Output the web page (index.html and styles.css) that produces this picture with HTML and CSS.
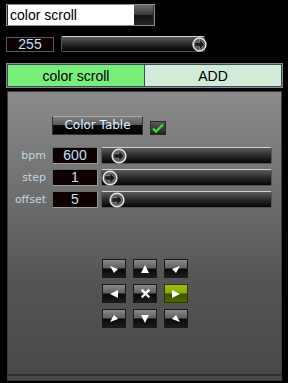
FILE: index.html
```html
<!DOCTYPE html>
<html lang="en">
<head>
    <meta charset="UTF-8">
    <title>color scroll</title>
    <link rel="stylesheet" href="styles.css">
</head>
<body>
    <div class="topbar">
        <div class="dropdown">
            <div class="dropdown-field">color scroll</div>
            <div class="dropdown-btn"></div>
        </div>
    </div>

    <div class="master-row">
        <div class="numbox master-num">255</div>
        <div class="slider master-slider">
            <svg class="knob" style="left: 130px" viewBox="0 0 14 14" width="15" height="15">
                <circle cx="7" cy="7" r="6" fill="#5a5a5a" stroke="#e6e6e6" stroke-width="1.4"/>
                <path d="M2.5 5h4.5v-3l4.5 5-4.5 5v-3h-4.5z" fill="#1c1c1c" stroke="#9a9a9a" stroke-width="0.6"/>
            </svg>
        </div>
    </div>

    <div class="tabs">
        <div class="tab tab-active">color scroll</div>
        <div class="tab">ADD</div>
    </div>

    <div class="panel">
        <div class="table-row">
            <div class="btn-table">Color Table</div>
            <div class="checkbox">
                <svg viewBox="0 0 14 12" width="14" height="12">
                    <path d="M2 6.5l3 3 7-7" fill="none" stroke="#2fe02f" stroke-width="2.4"/>
                </svg>
            </div>
        </div>

        <div class="params">
            <div class="param">
                <span class="param-label">bpm</span>
                <div class="numbox">600</div>
                <div class="slider">
                    <svg class="knob" style="left: 9px" viewBox="0 0 14 14" width="16" height="16">
                        <circle cx="7" cy="7" r="6" fill="#5a5a5a" stroke="#e6e6e6" stroke-width="1.3"/>
                        <path d="M2.5 5h4.5v-3l4.5 5-4.5 5v-3h-4.5z" fill="#1c1c1c" stroke="#9a9a9a" stroke-width="0.6"/>
                    </svg>
                </div>
            </div>
            <div class="param">
                <span class="param-label">step</span>
                <div class="numbox">1</div>
                <div class="slider">
                    <svg class="knob" style="left: 0" viewBox="0 0 14 14" width="16" height="16">
                        <circle cx="7" cy="7" r="6" fill="#5a5a5a" stroke="#e6e6e6" stroke-width="1.3"/>
                        <path d="M2.5 5h4.5v-3l4.5 5-4.5 5v-3h-4.5z" fill="#1c1c1c" stroke="#9a9a9a" stroke-width="0.6"/>
                    </svg>
                </div>
            </div>
            <div class="param">
                <span class="param-label">offset</span>
                <div class="numbox">5</div>
                <div class="slider">
                    <svg class="knob" style="left: 7px" viewBox="0 0 14 14" width="16" height="16">
                        <circle cx="7" cy="7" r="6" fill="#5a5a5a" stroke="#e6e6e6" stroke-width="1.3"/>
                        <path d="M2.5 5h4.5v-3l4.5 5-4.5 5v-3h-4.5z" fill="#1c1c1c" stroke="#9a9a9a" stroke-width="0.6"/>
                    </svg>
                </div>
            </div>
        </div>

        <div class="dirpad">
            <div class="dir-btn"><svg viewBox="0 0 10 10" width="10" height="10"><path d="M1 2l8 3-4 4z" fill="#fff"/></svg></div>
            <div class="dir-btn"><svg viewBox="0 0 10 10" width="10" height="10"><path d="M5 1l4 8H1z" fill="#fff"/></svg></div>
            <div class="dir-btn"><svg viewBox="0 0 10 10" width="10" height="10"><path d="M9 2L1 5l4 4z" fill="#fff"/></svg></div>
            <div class="dir-btn"><svg viewBox="0 0 10 10" width="10" height="10"><path d="M1 5l8-4v8z" fill="#fff"/></svg></div>
            <div class="dir-btn"><svg viewBox="0 0 10 10" width="11" height="11"><path d="M1.5 1.5l7 7M8.5 1.5l-7 7" stroke="#fff" stroke-width="2"/></svg></div>
            <div class="dir-btn dir-active"><svg viewBox="0 0 10 10" width="10" height="10"><path d="M9 5L1 1v8z" fill="#fff"/></svg></div>
            <div class="dir-btn"><svg viewBox="0 0 10 10" width="10" height="10"><path d="M1 8l8-3-4-4z" fill="#fff"/></svg></div>
            <div class="dir-btn"><svg viewBox="0 0 10 10" width="10" height="10"><path d="M5 9L9 1H1z" fill="#fff"/></svg></div>
            <div class="dir-btn"><svg viewBox="0 0 10 10" width="10" height="10"><path d="M9 8L1 5l4-4z" fill="#fff"/></svg></div>
        </div>

        <div class="panel-foot"></div>
    </div>
</body>
</html>
```

FILE: styles.css
```css
body {
    margin: 0;
    background-color: #000;
    font-family: "Liberation Sans", Arial, sans-serif;
    width: 288px;
    height: 383px;
    overflow: hidden;
}

/* top dropdown */
.topbar {
    padding: 4px 0 0 6px;
}

.dropdown {
    display: flex;
    width: 145px;
    height: 20px;
    border: 1px solid #8c8c8c;
    background-color: #2a2a2a;
    padding: 0 1px 0 1px;
}

.dropdown-field {
    flex: 1;
    background-color: #fff;
    color: #000;
    font-size: 14px;
    line-height: 20px;
    padding-left: 2px;
}

.dropdown-btn {
    width: 19px;
    background: linear-gradient(#6c6c6c, #3a3a3a 50%, #141414 52%, #262626);
}

/* master row */
.master-row {
    display: flex;
    align-items: center;
    gap: 7px;
    padding: 10px 0 0 6px;
}

.numbox {
    box-sizing: border-box;
    background-color: #0e0000;
    border: 1px solid #5a5a5a;
    color: #bfe2ff;
    font-size: 14px;
    text-align: center;
    line-height: 15px;
}

.master-num {
    width: 48px;
    height: 15px;
    line-height: 13px;
}

.slider {
    position: relative;
    box-sizing: border-box;
    height: 17px;
    border: 1px solid #555;
    border-top-color: #d0d0d0;
    border-radius: 2px;
    background: linear-gradient(#5b5b5b, #262626 55%, #050505);
}

.master-slider {
    width: 144px;
    height: 16px;
}

.knob {
    position: absolute;
    top: 0;
}

/* tabs */
.tabs {
    display: flex;
    margin: 11px 5px 0 6px;
    border: 1px solid #8c8c8c;
    height: 21px;
    padding: 1px;
    background-color: #3a4a5a;
    gap: 1px;
}

.tab {
    flex: 1;
    background-color: #d0ebd8;
    color: #000;
    text-align: center;
    font-size: 14px;
    line-height: 22px;
}

.tab-active {
    background-color: #78ee7a;
}

/* main panel */
.panel {
    box-sizing: border-box;
    margin: 3px 6px 0 7px;
    height: 290px;
    border: 1px solid #3e3e3e;
    background: linear-gradient(#8a8a8a, #777 25%, #555 65%, #484848);
    padding-top: 24px;
    position: relative;
}

.table-row {
    display: flex;
    align-items: center;
    gap: 7px;
    padding-left: 44px;
}

.btn-table {
    box-sizing: border-box;
    width: 91px;
    height: 19px;
    border: 1px solid #333;
    border-top-color: #aaa;
    background: linear-gradient(#7e7e7e, #5a5a5a 45%, #0a0a0a 50%, #000);
    color: #dff0ff;
    font-family: "DejaVu Sans", sans-serif;
    font-size: 12px;
    text-align: center;
    line-height: 17px;
}

.checkbox {
    box-sizing: border-box;
    width: 16px;
    height: 14px;
    margin-top: 5px;
    border: 1px solid #2a2a2a;
    background: linear-gradient(#5a5a5a, #222);
    display: flex;
    align-items: center;
    justify-content: center;
}

.params {
    display: flex;
    flex-direction: column;
    gap: 5px;
    margin-top: 12px;
}

.param {
    display: flex;
    align-items: center;
}

.param-label {
    width: 38px;
    text-align: right;
    color: #c2d6e0;
    font-family: "DejaVu Sans", sans-serif;
    font-size: 11px;
    margin-right: 6px;
}

.param .numbox {
    width: 46px;
    height: 17px;
    border-color: #6a6a6a #9a9a9a #9a9a9a #6a6a6a;
    margin-right: 3px;
}

.param .slider {
    width: 171px;
}

/* direction pad */
.dirpad {
    display: grid;
    grid-template-columns: repeat(3, 24px);
    grid-auto-rows: 19px;
    column-gap: 7px;
    row-gap: 6px;
    margin: 51px 0 0 94px;
}

.dir-btn {
    box-sizing: border-box;
    border: 1px solid #1a1a1a;
    background: linear-gradient(#8a8a8a, #5e5e5e 48%, #080808 52%, #1c1c1c);
    display: flex;
    align-items: center;
    justify-content: center;
}

.dir-active {
    background: linear-gradient(#9cc21a, #84ac00 48%, #3e5200 52%, #4e6600);
    border-color: #2c3a00;
}

.panel-foot {
    position: absolute;
    left: 0;
    right: 0;
    bottom: 4px;
    height: 2px;
    background-color: #2e2e2e;
}
```
